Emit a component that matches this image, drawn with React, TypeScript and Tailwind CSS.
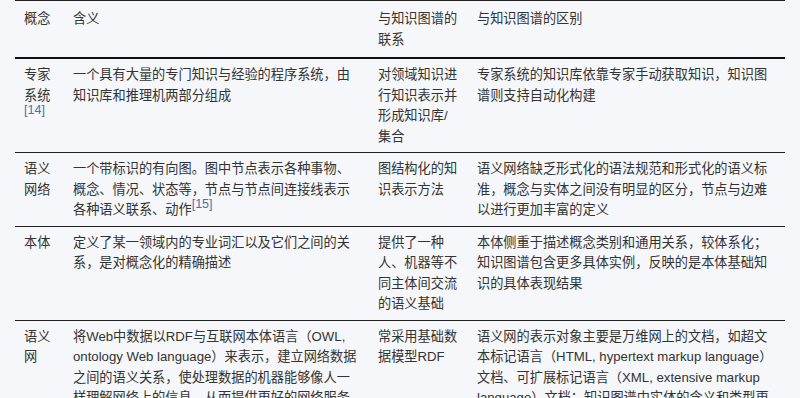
import React from 'react';

type Row = {
    concept: React.ReactNode;
    meaning: React.ReactNode;
    relation: React.ReactNode;
    diff: React.ReactNode;
};

const Ref: React.FC<{ n: number }> = ({ n }) => (
    <sup className="text-[12.5px] text-[#4b6fa8]">[{n}]</sup>
);

const rows: Row[] = [
    {
        concept: <>专家系统<Ref n={14} /></>,
        meaning: '一个具有大量的专门知识与经验的程序系统，由知识库和推理机两部分组成',
        relation: '对领域知识进行知识表示并形成知识库/集合',
        diff: '专家系统的知识库依靠专家手动获取知识，知识图谱则支持自动化构建',
    },
    {
        concept: '语义网络',
        meaning: <>一个带标识的有向图。图中节点表示各种事物、概念、情况、状态等，节点与节点间连接线表示各种语义联系、动作<Ref n={15} /></>,
        relation: '图结构化的知识表示方法',
        diff: '语义网络缺乏形式化的语法规范和形式化的语义标准，概念与实体之间没有明显的区分，节点与边难以进行更加丰富的定义',
    },
    {
        concept: '本体',
        meaning: '定义了某一领域内的专业词汇以及它们之间的关系，是对概念化的精确描述',
        relation: '提供了一种人、机器等不同主体间交流的语义基础',
        diff: '本体侧重于描述概念类别和通用关系，较体系化；知识图谱包含更多具体实例，反映的是本体基础知识的具体表现结果',
    },
    {
        concept: '语义网',
        meaning: '将Web中数据以RDF与互联网本体语言（OWL, ontology Web language）来表示，建立网络数据之间的语义关系，使处理数据的机器能够像人一样理解网络上的信息，从而提供更好的网络服务',
        relation: '常采用基础数据模型RDF',
        diff: '语义网的表示对象主要是万维网上的文档，如超文本标记语言（HTML, hypertext markup language）文档、可扩展标记语言（XML, extensive markup language）文档；知识图谱中实体的含义和类型更加丰富',
    },
];

const App: React.FC = () => {
    return (
        <div className="min-h-screen bg-[#f5f7fa] font-['Liberation_Sans','Noto_Sans_CJK_SC',sans-serif] text-[13.2px] leading-[20.5px] text-[#333]">
            <table className="ml-[15px] w-[770px] table-fixed border-collapse border-t border-[#222]">
                <colgroup>
                    <col className="w-[49px]" />
                    <col className="w-[305px]" />
                    <col className="w-[99px]" />
                    <col className="w-[317px]" />
                </colgroup>
                <thead>
                    <tr className="border-b-2 border-[#111]">
                        <th className="px-[9px] pt-[8px] pb-[7px] text-left align-top font-normal">概念</th>
                        <th className="px-[9px] pt-[8px] pb-[7px] text-left align-top font-normal">含义</th>
                        <th className="px-[9px] pt-[8px] pb-[7px] text-left align-top font-normal">与知识图谱的联系</th>
                        <th className="px-[9px] pt-[8px] pb-[7px] text-left align-top font-normal">与知识图谱的区别</th>
                    </tr>
                </thead>
                <tbody>
                    {rows.map((r, i) => (
                        <tr key={i} className="border-b border-[#222]">
                            <td className="px-[9px] pt-[6px] pb-[5px] align-top">{r.concept}</td>
                            <td className="px-[9px] pt-[6px] pb-[5px] align-top">{r.meaning}</td>
                            <td className="px-[9px] pt-[6px] pb-[5px] align-top">{r.relation}</td>
                            <td className="px-[9px] pt-[6px] pb-[5px] align-top">{r.diff}</td>
                        </tr>
                    ))}
                </tbody>
            </table>
        </div>
    );
};

export default App;
